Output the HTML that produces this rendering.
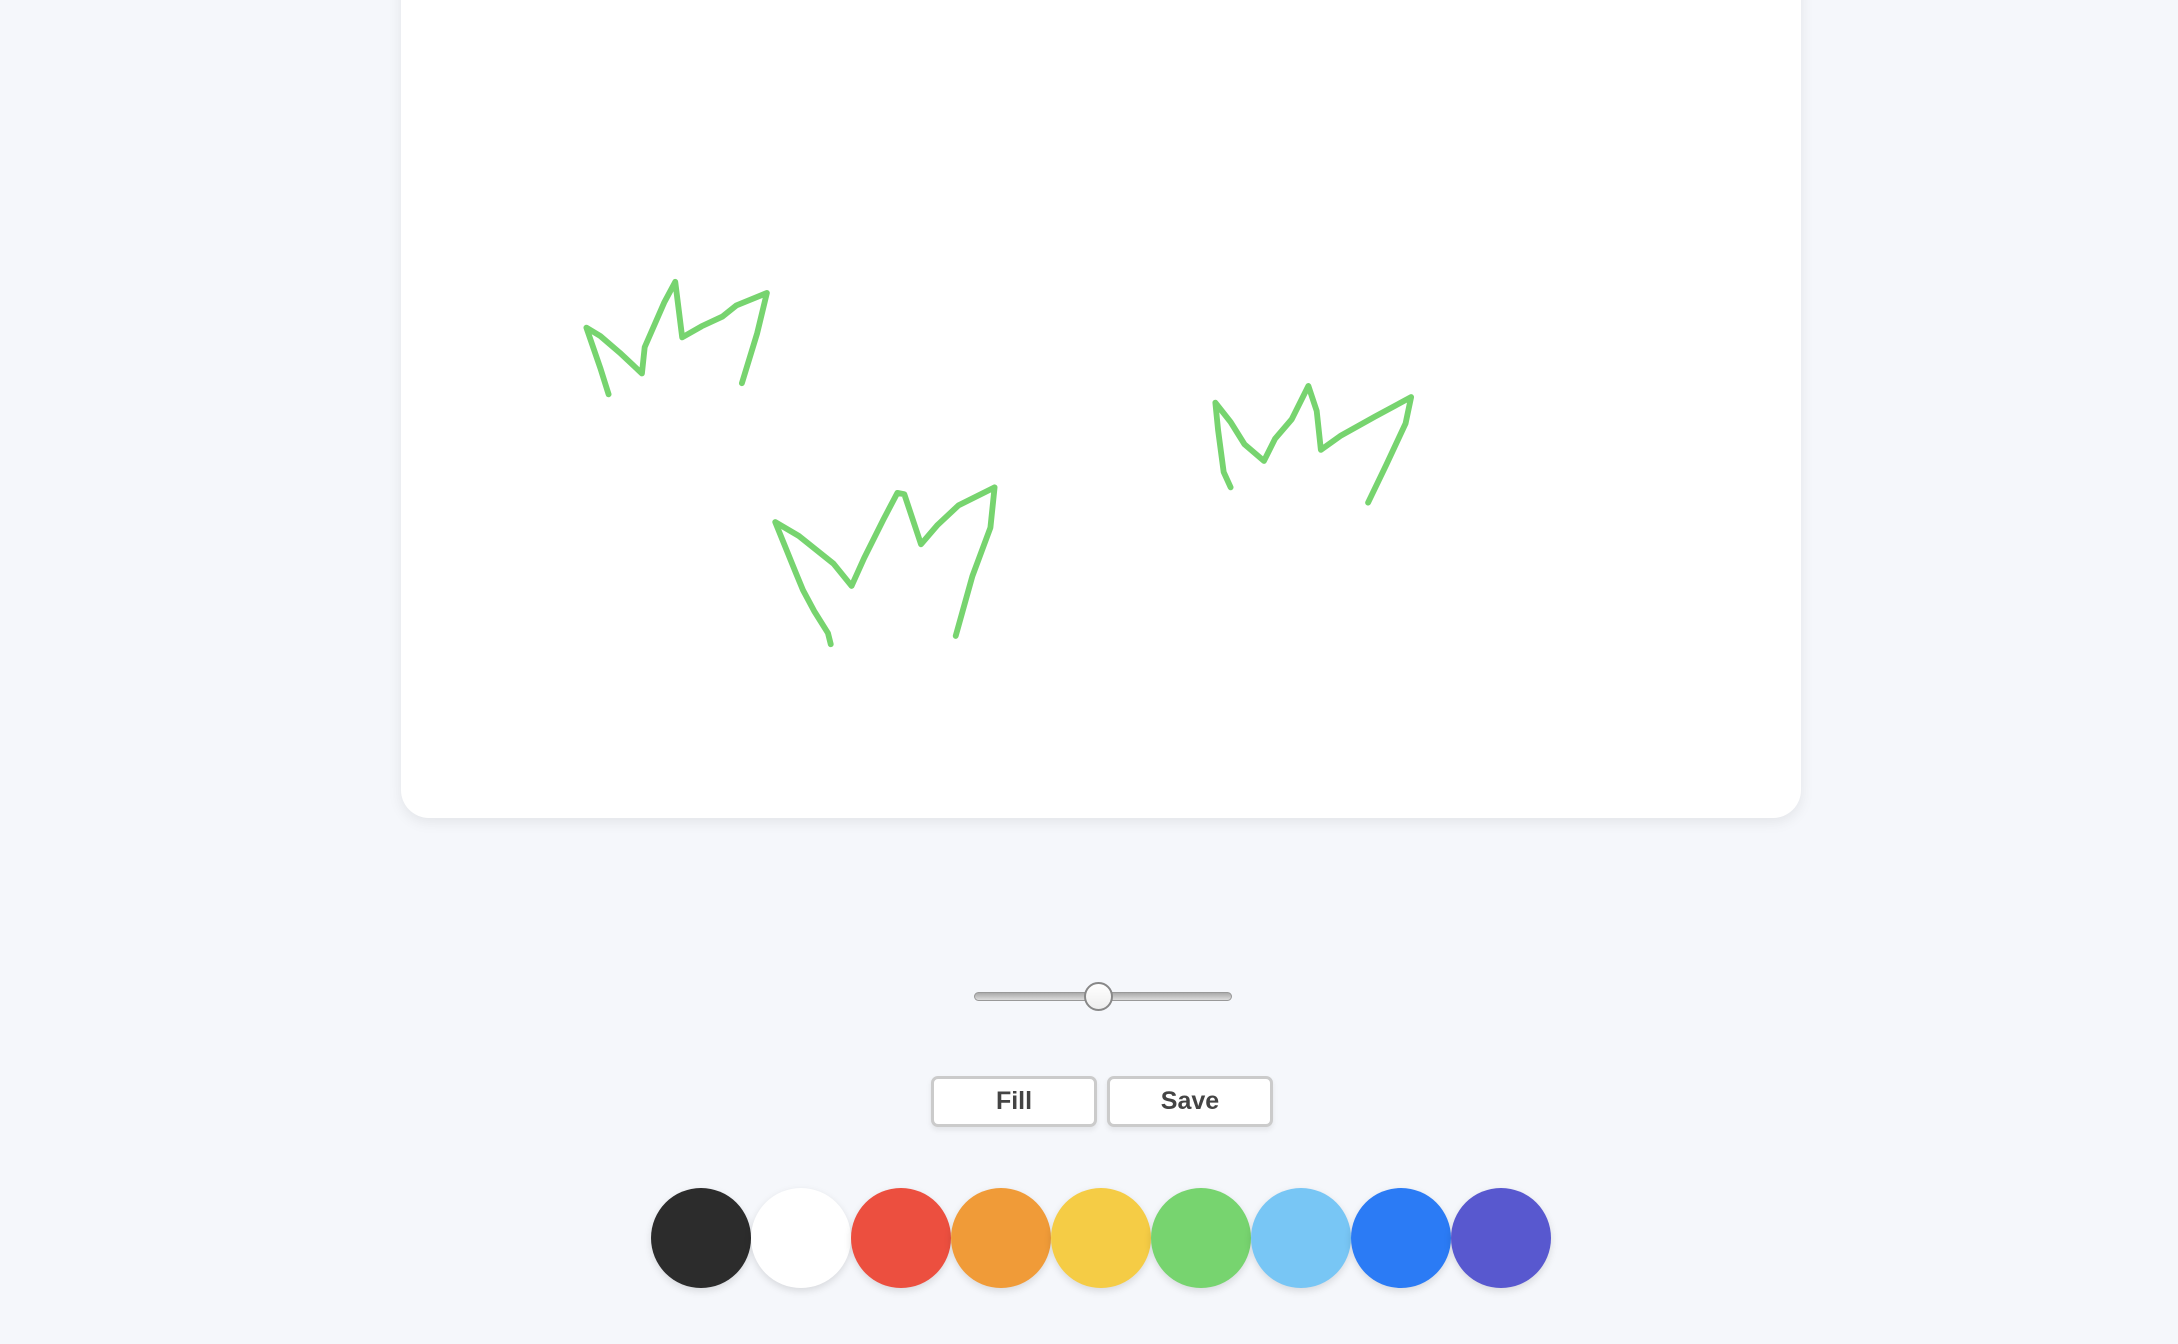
<!DOCTYPE html>
<html><head><meta charset="utf-8"><style>
html,body{margin:0;padding:0;width:2178px;height:1344px;overflow:hidden;background:#f5f7fb;font-family:"Liberation Sans",sans-serif}
.card{position:absolute;left:401px;top:-40px;width:1400px;height:858px;background:#fff;border-radius:28px;box-shadow:0 4px 14px rgba(0,0,0,0.08)}
svg.s{position:absolute;left:0;top:0}
.track{position:absolute;left:974px;top:992px;width:258px;height:9px;border-radius:5px;background:linear-gradient(#aaa,#ddd);border:1px solid #999;box-sizing:border-box}
.thumb{position:absolute;left:1084px;top:982px;width:29px;height:29px;border-radius:50%;background:linear-gradient(#fff,#eee);border:2px solid #888;box-sizing:border-box}
.btn{position:absolute;top:1076px;width:166px;height:51px;box-sizing:border-box;border:3px solid #cbcbcb;border-radius:7px;background:#fff;color:#444;font-weight:bold;font-size:25px;text-align:center;line-height:45px;box-shadow:0 3px 6px rgba(0,0,0,0.08)}
.c{position:absolute;top:1188px;width:100px;height:100px;border-radius:50%;box-shadow:0 3px 8px rgba(0,0,0,0.12)}
</style></head><body>
<div class="card"></div>
<svg class="s" width="2178" height="1344" viewBox="0 0 1568 968">
<g fill="none" stroke="#77d46f" stroke-width="4.2" stroke-linecap="round" stroke-linejoin="round">
<polyline points="438,284 432,265 422,236 432,242 446,254 462,269 464,250 478,218 486,203 491,243 505,235 520,228 530,220 552,211 545,240 534,276"/>
<polyline points="598,464 596,456 586,440 578,425 573,413 558,376 575,386 600,406 613,422 622,402 636,374 646,355 651,356 663,392 675,378 690,364 716,351 713,380 700,415 688,458"/>
<polyline points="886,351 881,340 877,310 875,290 886,304 896,320 910,332 918,316 930,302 942,278 948,296 951,324 965,314 990,300 1016,286 1012,305 998,335 985,362"/>
</g></svg>
<div class="track"></div><div class="thumb"></div>
<div class="btn" style="left:931px">Fill</div>
<div class="btn" style="left:1107px">Save</div>
<div class="c" style="left:651px;background:#2c2c2c"></div>
<div class="c" style="left:751px;background:#fff"></div>
<div class="c" style="left:851px;background:#ec4f3f"></div>
<div class="c" style="left:951px;background:#f09b38"></div>
<div class="c" style="left:1051px;background:#f5cc45"></div>
<div class="c" style="left:1151px;background:#77d46f"></div>
<div class="c" style="left:1251px;background:#78c6f5"></div>
<div class="c" style="left:1351px;background:#2b7bf5"></div>
<div class="c" style="left:1451px;background:#5858cf"></div>
</body></html>
